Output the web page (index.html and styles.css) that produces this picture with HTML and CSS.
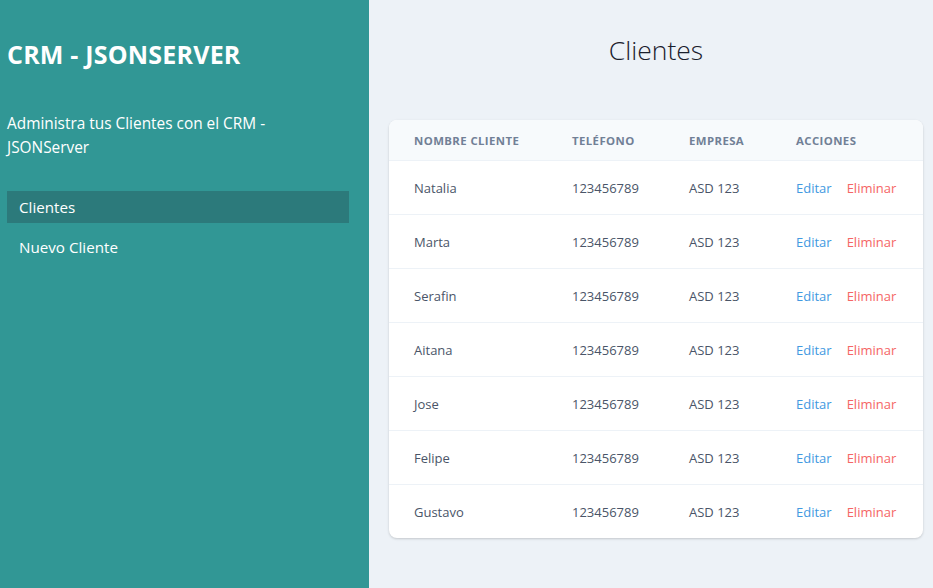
FILE: index.html
```html
<!DOCTYPE html>
<html lang="es">
<head>
<meta charset="utf-8">
<title>CRM - JSONSERVER</title>
<link rel="stylesheet" href="styles.css">
</head>
<body>
<div class="layout">
  <aside class="sidebar">
    <h1 class="brand">CRM - JSONSERVER</h1>
    <p class="tagline">Administra tus Clientes con el CRM - JSONServer</p>
    <nav class="nav">
      <a class="nav-link active" href="#">Clientes</a>
      <a class="nav-link" href="#">Nuevo Cliente</a>
    </nav>
  </aside>
  <main class="main">
    <h2 class="page-title">Clientes</h2>
    <div class="card">
      <table class="clients">
        <colgroup>
          <col class="c1"><col class="c2"><col class="c3"><col class="c4">
        </colgroup>
        <thead>
          <tr><th>Nombre Cliente</th><th>Teléfono</th><th>Empresa</th><th>Acciones</th></tr>
        </thead>
        <tbody>
          <tr><td>Natalia</td><td>123456789</td><td>ASD 123</td><td><a class="edit" href="#">Editar</a><a class="del" href="#">Eliminar</a></td></tr>
          <tr><td>Marta</td><td>123456789</td><td>ASD 123</td><td><a class="edit" href="#">Editar</a><a class="del" href="#">Eliminar</a></td></tr>
          <tr><td>Serafin</td><td>123456789</td><td>ASD 123</td><td><a class="edit" href="#">Editar</a><a class="del" href="#">Eliminar</a></td></tr>
          <tr><td>Aitana</td><td>123456789</td><td>ASD 123</td><td><a class="edit" href="#">Editar</a><a class="del" href="#">Eliminar</a></td></tr>
          <tr><td>Jose</td><td>123456789</td><td>ASD 123</td><td><a class="edit" href="#">Editar</a><a class="del" href="#">Eliminar</a></td></tr>
          <tr><td>Felipe</td><td>123456789</td><td>ASD 123</td><td><a class="edit" href="#">Editar</a><a class="del" href="#">Eliminar</a></td></tr>
          <tr><td>Gustavo</td><td>123456789</td><td>ASD 123</td><td><a class="edit" href="#">Editar</a><a class="del" href="#">Eliminar</a></td></tr>
        </tbody>
      </table>
    </div>
  </main>
</div>
</body>
</html>
```

FILE: styles.css
```css
* { box-sizing: border-box; }
html, body { margin: 0; padding: 0; height: 100%; }
body {
  font-family: "Open Sans", "Noto Sans", "Liberation Sans", sans-serif;
  background: #edf2f7;
  color: #4a5568;
}
.layout { display: flex; min-height: 588px; }
.sidebar {
  width: 369px;
  flex: none;
  background: #319795;
  color: #fff;
  padding: 34px 20px 0 7px;
}
.brand {
  margin: 0;
  font-size: 25px;
  font-weight: 700;
  line-height: 40px;
  letter-spacing: 0.2px;
}
.tagline {
  margin: 38px 0 0;
  font-size: 15.4px;
  line-height: 24px;
}
.nav { display: flex; flex-direction: column; gap: 8px; margin-top: 31px; }
.nav-link {
  display: block;
  height: 32px;
  line-height: 32px;
  padding-left: 12px;
  color: #fff;
  text-decoration: none;
  font-size: 15.2px;
}
.nav-link.active { background: #2c7a7b; }
.main { flex: 1; padding: 0 10px 0 20px; }
.page-title {
  margin: 0;
  padding-top: 32px;
  height: 120px;
  text-align: center;
  font-size: 26.5px;
  font-weight: 300;
  line-height: 36px;
  color: #1a202c;
}
.card {
  background: #fff;
  border-radius: 8px;
  overflow: hidden;
  box-shadow: 0 1px 3px rgba(0,0,0,0.12), 0 1px 2px rgba(0,0,0,0.06);
}
.clients { width: 100%; border-collapse: collapse; table-layout: fixed; }
.c1 { width: 183px; } .c2 { width: 117px; } .c3 { width: 107px; }
.clients th {
  background: #f7fafc;
  height: 40px;
  text-align: left;
  font-size: 11.4px;
  font-weight: 700;
  text-transform: uppercase;
  letter-spacing: 0.4px;
  color: #718096;
  border-bottom: 1px solid #edf2f7;
  padding: 2px 0 0;
}
.clients td {
  height: 54px;
  font-size: 13px;
  color: #4a5568;
  border-bottom: 1px solid #edf2f7;
  padding: 2px 0 0;
}
.clients tbody tr:last-child td { border-bottom: none; }
.clients th:first-child, .clients td:first-child { padding-left: 25px; }
.edit, .del { text-decoration: none; font-size: 13px; }
.edit { color: #4299e1; }
.del { color: #f56565; margin-left: 15px; }
```
